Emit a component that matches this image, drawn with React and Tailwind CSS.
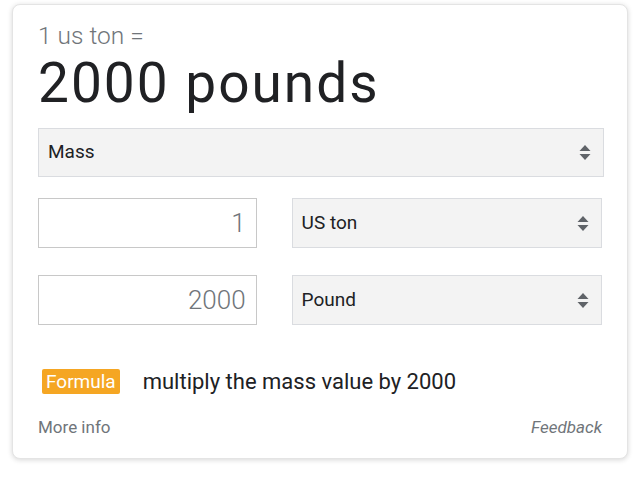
import { useState } from "react";

function Arrows() {
    return (
        <svg width="14" height="17" viewBox="0 0 14 17" className="shrink-0">
            <path d="M7 1 L12.5 7 L1.5 7 Z" fill="#5f6368" />
            <path d="M7 16 L12.5 10 L1.5 10 Z" fill="#5f6368" />
        </svg>
    )
}

function SelectBox({ label, className }) {
    return (
        <div className={`flex items-center justify-between bg-[#f3f3f3] border border-[#dadce0] pl-[9px] pr-[11px] ${className}`}>
            <span className="text-[19px] text-[#202124]">{label}</span>
            <Arrows />
        </div>
    )
}

function NumberBox({ value }) {
    return (
        <div className="w-[219px] h-[50px] flex items-center justify-end border border-[#c8c8c8] bg-white pr-[10px]">
            <span className="text-[26px] font-light text-[#70757a]">{value}</span>
        </div>
    )
}

export default function App() {
    const [from] = useState("1")
    const [to] = useState("2000")

    return (
        <div className="w-[640px] h-[485px] bg-white pt-[4px] pl-[12px] font-['Roboto',_'Liberation_Sans',_sans-serif]">
            <div className="w-[616px] h-[455px] rounded-[8px] border border-[#e4e4e4] shadow-[0_1px_5px_rgba(32,33,36,0.18)] bg-white px-[25px] pt-[15px]">
                <div className="text-[24.5px] leading-[32px] font-light text-[#70757a]">1 us ton =</div>
                <div className="text-[55px] leading-[64px] tracking-[2px] text-[#202124] mt-[-1px]">2000 pounds</div>
                <SelectBox label="Mass" className="mt-[13px] w-[566px] h-[49px]" />
                <div className="flex mt-[21px] gap-[35px]">
                    <NumberBox value={from} />
                    <SelectBox label="US ton" className="w-[311px] h-[50px]" />
                </div>
                <div className="flex mt-[27px] gap-[35px]">
                    <NumberBox value={to} />
                    <SelectBox label="Pound" className="w-[311px] h-[50px]" />
                </div>
                <div className="flex items-center mt-[40px] ml-[4px]">
                    <span className="bg-[#f5a623] text-white text-[19px] leading-[25px] px-[4px] rounded-[2px]">Formula</span>
                    <span className="ml-[23px] text-[22px] text-[#202124]">multiply the mass value by 2000</span>
                </div>
                <div className="flex justify-between mt-[17px] text-[17px] text-[#70757a]">
                    <span>More info</span>
                    <span className="italic">Feedback</span>
                </div>
            </div>
        </div>
    )
}
